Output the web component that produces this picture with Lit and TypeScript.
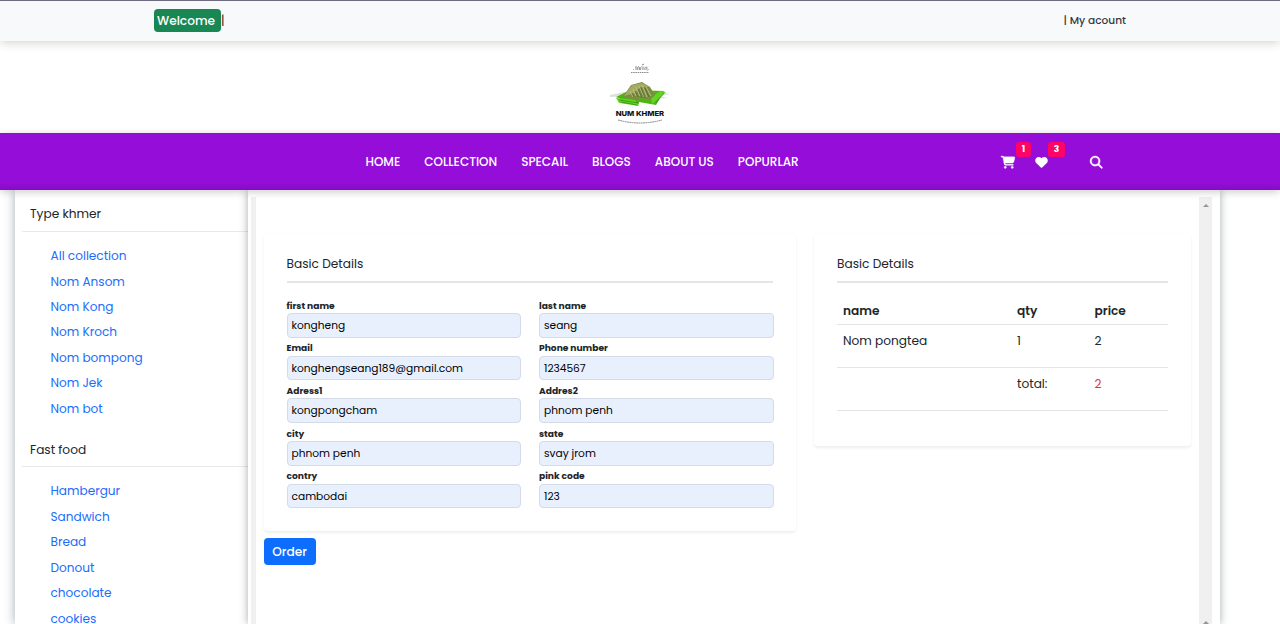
import { LitElement, html, css } from "lit";
import { customElement, property } from "lit/decorators.js";

const icons = {
  cart: {
    box: "0 0 576 512",
    d: "M0 24C0 10.7 10.7 0 24 0H69.5c22 0 41.5 12.8 50.6 32h411c26.3 0 45.5 25 38.6 50.4l-41 152.3c-8.5 31.4-37 53.3-69.5 53.3H170.7l5.4 28.5c2.2 11.3 12.1 19.5 23.6 19.5H488c13.3 0 24 10.7 24 24s-10.7 24-24 24H199.7c-34.6 0-64.3-24.6-70.7-58.5L77.4 54.5c-.7-3.8-4-6.5-7.9-6.5H24C10.7 48 0 37.3 0 24zM128 464a48 48 0 1 1 96 0 48 48 0 1 1 -96 0zm336-48a48 48 0 1 1 0 96 48 48 0 1 1 0-96z",
  },
  heart: {
    box: "0 0 512 512",
    d: "M47.6 300.4L228.3 469.1c7.5 7 17.4 10.9 27.7 10.9s20.2-3.9 27.7-10.9L464.4 300.4c30.4-28.3 47.6-68 47.6-109.5v-5.8c0-69.9-50.5-129.5-119.4-141C347 36.5 300.6 51.4 268 84L256 96 244 84c-32.6-32.6-79-47.5-124.6-39.9C50.5 55.6 0 115.2 0 185.1v5.8c0 41.5 17.2 81.2 47.6 109.5z",
  },
  search: {
    box: "0 0 512 512",
    d: "M416 208c0 45.9-14.9 88.3-40 122.7L502.6 457.4c12.5 12.5 12.5 32.8 0 45.3s-32.8 12.5-45.3 0L330.7 376c-34.4 25.2-76.8 40-122.7 40C93.1 416 0 322.9 0 208S93.1 0 208 0S416 93.1 416 208zM208 352a144 144 0 1 0 0-288 144 144 0 1 0 0 288z",
  },
};

const icon = (name: keyof typeof icons) =>
  html`<svg class="icon ${name}" viewBox=${icons[name].box}><path d=${icons[name].d} /></svg>`;

@customElement("shop-logo")
class ShopLogo extends LitElement {
  static styles = css`
    :host { display: block; width: 64px; height: 64px; }
    svg { display: block; }
    .name { font: 800 6.800px Inter, sans-serif; fill: #111; }
  `;
  render() {
    return html`<svg width="64" height="64" viewBox="0 0 64 64">
      <g fill="none" stroke="#555" stroke-width=".7">
        <path d="M28 6v3M27.500 5l1 1M30 9c-1-2 0-4 1-3s0 3 1 3c1.500 0 0-3 1.500-3.500M34 4l2-1M35 9V5.500M37 9c-.5-2 .5-3.500 1.500-3s-.3 2 .7 3.500M25 8.500h.6M40 8.500h.6" />
        <path d="M23 11.500h18" stroke-dasharray="1.500 .7" />
      </g>
      <path d="M2 34l14-3 8 4-22 1zM44 30l18 3-9 2 6 2-16 1z" fill="#e0dfdb" />
      <path d="M8 36L22 29l34 1-8 14-17-3-1 4z" fill="#4cb516" />
      <path d="M8 37l19 2 4 6-20-3zM44 43l14-12-6-1-9 7z" fill="#65d321" />
      <path d="M11 39l20 3M13 41l16 3M48 42l8-10" stroke="#28780b" stroke-width=".6" fill="none" />
      <path d="M15 36l8-12 11-3 8 5 5 8-5 5-9-2-4 2z" fill="#7e8c42" />
      <path d="M16 35l8-11 10-2 8 4-10 0-5 6z" fill="#a3aa62" />
      <g fill="none" stroke="#bec789" stroke-width=".9">
        <path d="M22 30l3 6M25 28l3 7M28 26l4 9M31 25l5 11M34 24l5 12M38 26l5 9" />
      </g>
      <g fill="none" stroke="#4c652b" stroke-width=".7">
        <path d="M24 32l2 4M27 30l3 6M30 28l4 9M33 27l4 10M37 27l4 9" />
      </g>
      <text class="name" x="7.700" y="54.500" textLength="48.500" lengthAdjust="spacingAndGlyphs">NUM KHMER</text>
      <path d="M10 59Q32 65 54 59" fill="none" stroke="#777" stroke-width=".9" stroke-dasharray="1.800 .5" />
    </svg>`;
  }
}

@customElement("side-group")
class SideGroup extends LitElement {
  @property() heading = "";
  @property({ attribute: false }) items: string[] = [];
  static styles = css`
    :host { display: block; padding-bottom: 4.650px; }
    .heading {
      box-sizing: border-box; height: 41.600px; margin-left: 7px; padding: 13px 0 0 8px;
      border-bottom: 1px solid #e9e9ec; color: #212529; font-size: 12.160px; line-height: 22px;
    }
    ul { list-style: none; margin: 0; padding: 11px 0 0 35.500px; }
    li { height: 25.450px; line-height: 25.450px; font-size: 12.100px; }
    a { color: #1a6dfd; text-decoration: none; }
  `;
  render() {
    return html`<div class="heading">${this.heading}</div>
      <ul>${this.items.map((i) => html`<li><a>${i}</a></li>`)}</ul>`;
  }
}

@customElement("app-root")
class AppRoot extends LitElement {
  static styles = css`
    :host {
      display: flex; flex-direction: column; height: 624px; overflow: hidden; background: #fff;
      font-family: Poppins, Inter, sans-serif; font-size: 12.160px; color: #212529;
    }
    * { box-sizing: border-box; }
    .topbar {
      display: flex; justify-content: space-between; align-items: center; flex: none; height: 41px;
      padding: 0 154px 1px; border-top: 1px solid #6d6a82; background: #f8f9fb;
      box-shadow: 0 2px 9px rgba(90, 90, 60, .25);
    }
    .account { font-size: 10.600px; font-weight: 500; color: #343a40; }
    .welcome { display: flex; align-items: center; }
    .pill { height: 23px; width: 67px; padding-left: 3px; border-radius: 4px; background: #198754; color: #fff; font-weight: 500; line-height: 23px; }
    .brand { display: flex; justify-content: center; flex: none; height: 92.300px; padding-top: 20px; }
    .nav {
      position: relative; z-index: 2; display: flex; align-items: center; flex: none; height: 57.200px;
      background: linear-gradient(#950dd8 88%, #850bc0); color: #fff;
      box-shadow: 0 2px 8px rgba(0, 0, 0, .2);
    }
    .links { display: flex; gap: 24px; margin-left: 365.500px; width: 635.500px; font-weight: 500; font-size: 12px; white-space: nowrap; }
    .tools { display: flex; align-items: center; }
    .tool { position: relative; display: flex; }
    .icon { display: block; height: 12.500px; fill: #fff; }
    .cart { width: 14px; stroke: #fff; stroke-width: 14px; overflow: visible; }
    .heart { width: 13px; }
    .search { width: 12.500px; stroke: #fff; stroke-width: 14px; overflow: visible; }
    .wish { margin: 0 42px 0 20px; }
    .badge {
      position: absolute; left: 15px; top: -14px; width: 15px; height: 15px; border-radius: 3px;
      background: #ff0467; font-size: 9px; font-weight: 700; line-height: 15px; text-align: center;
    }
    .wish .badge { left: 13px; width: 17px; }
    .body { display: flex; flex: 1; min-height: 0; padding-left: 15px; }
    .side { flex: none; width: 232.500px; box-shadow: 0 0 10px rgba(40, 60, 70, .42); }
    .panel {
      position: relative; display: flex; flex: none; width: 972.500px; padding: 7px 8px 0 3px;
      background: #fff; box-shadow: 0 0 8px rgba(40, 50, 60, .42);
    }
    .bar { flex: none; background: #f0f0f0; }
    .bar.left { width: 5px; }
    .bar.right { display: flex; flex-direction: column; justify-content: space-between; align-items: center; width: 13px; padding: 7px 0 0; }
    .arrow { border: 3px solid transparent; border-top: 0; border-bottom: 3px solid #969696; }
    .content { display: flex; flex: 1; align-items: flex-start; gap: 18px; padding: 36.500px 8px 0; }
    .card { padding: 20px 23px 0; border-radius: 4px; background: #fff; box-shadow: 0 1.500px 3px rgba(0, 0, 0, .065); }
    .form-col { width: 532.500px; }
    .form-card { height: 297px; }
    .order-card { width: 377px; height: 212px; }
    .title { height: 29.500px; line-height: 19px; border-bottom: 2px solid #e5e5e5; }
    .fields { display: grid; grid-template-columns: 234.500px 234.500px; column-gap: 18px; padding-top: 14.300px; }
    .field { height: 42.650px; }
    .label { display: block; height: 15.200px; font-size: 9.120px; font-weight: 700; line-height: 15px; }
    .input {
      height: 24.700px; padding-left: 4px; border: 1px solid #d3dbe7; border-radius: 4px;
      background: #e8f0fe; color: #000; font-size: 10.640px; line-height: 23px;
    }
    .order {
      display: block; width: 52px; height: 27px; margin-top: 7.500px; padding: 0; border: 0; border-radius: 4px;
      background: #0d6efd; color: #fff; font: 500 12.160px Poppins, Inter, sans-serif;
    }
    .row { display: grid; grid-template-columns: 174px 77.500px 1fr; height: 43px; padding: 6px 0 0 6px; border-bottom: 1px solid #e2e4e7; line-height: 19px; }
    .row.head { height: 42px; padding-top: 17.500px; font-weight: 600; }
    .total { color: #dc3545; }
  `;

  fields = [
    ["first name", "kongheng"], ["last name", "seang"],
    ["Email", "konghengseang189@gmail.com"], ["Phone number", "1234567"],
    ["Adress1", "kongpongcham"], ["Addres2", "phnom penh"],
    ["city", "phnom penh"], ["state", "svay jrom"],
    ["contry", "cambodai"], ["pink code", "123"],
  ];

  render() {
    return html`
      <div class="topbar">
        <div class="welcome"><span class="pill">Welcome</span><span>|</span></div>
        <div class="account">| My acount</div>
      </div>
      <div class="brand"><shop-logo></shop-logo></div>
      <nav class="nav">
        <div class="links">
          ${["HOME", "COLLECTION", "SPECAIL", "BLOGS", "ABOUT US", "POPURLAR"].map((l) => html`<a>${l}</a>`)}
        </div>
        <div class="tools">
          <div class="tool">${icon("cart")}<span class="badge">1</span></div>
          <div class="tool wish">${icon("heart")}<span class="badge">3</span></div>
          ${icon("search")}
        </div>
      </nav>
      <div class="body">
        <aside class="side">
          <side-group heading="Type khmer" .items=${["All collection", "Nom Ansom", "Nom Kong", "Nom Kroch", "Nom bompong", "Nom Jek", "Nom bot"]}></side-group>
          <side-group heading="Fast food" .items=${["Hambergur", "Sandwich", "Bread", "Donout", "chocolate", "cookies"]}></side-group>
        </aside>
        <main class="panel">
          <div class="bar left"></div>
          <div class="content">
            <div class="form-col">
              <div class="card form-card">
                <div class="title">Basic Details</div>
                <div class="fields">
                  ${this.fields.map(([label, value]) => html`<div class="field">
                    <span class="label">${label}</span><div class="input">${value}</div>
                  </div>`)}
                </div>
              </div>
              <button class="order">Order</button>
            </div>
            <div class="card order-card">
              <div class="title">Basic Details</div>
              <div class="row head"><span>name</span><span>qty</span><span>price</span></div>
              <div class="row"><span>Nom pongtea</span><span>1</span><span>2</span></div>
              <div class="row"><span></span><span>total:</span><span class="total">2</span></div>
            </div>
          </div>
          <div class="bar right"><i class="arrow"></i><i class="arrow"></i></div>
        </main>
      </div>
    `;
  }
}
